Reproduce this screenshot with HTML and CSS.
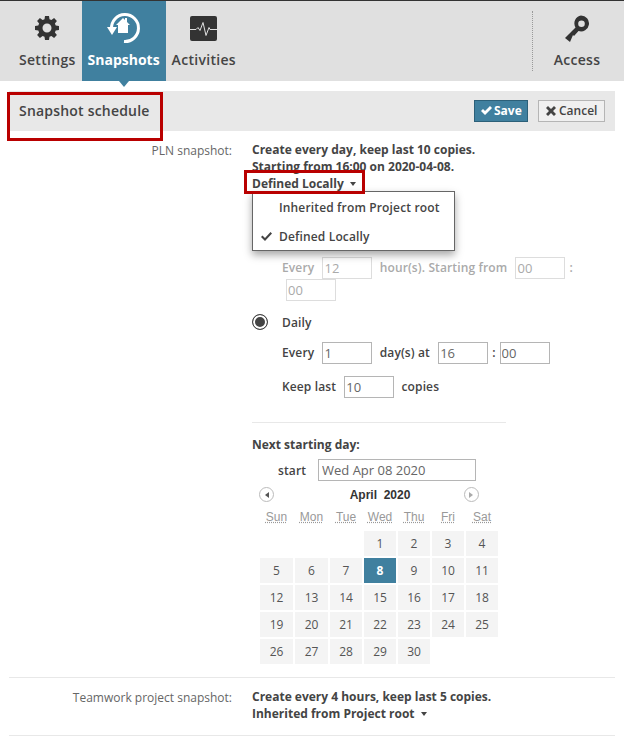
FILE: index.html
```html
<!DOCTYPE html>
<html lang="en">
<head>
    <meta charset="UTF-8">
    <meta name="viewport" content="width=device-width, initial-scale=1.0">
    <title>Snapshot schedule</title>
    <link rel="stylesheet" href="styles.css">
</head>
<body>

<nav class="tabs">
    <a class="tab">
        <span class="tab-icon">
            <svg width="24" height="24" viewBox="0 0 24 24"><path fill="#333" fill-rule="evenodd" d="M10 0h4l.5 3.300 1.900.8 2.700-2 2.800 2.800-2 2.700.8 1.900 3.300.5v4l-3.300.5-.8 1.900 2 2.700-2.800 2.800-2.700-2-1.900.8-.5 3.300h-4l-.5-3.300-1.900-.8-2.700 2-2.800-2.800 2-2.700-.8-1.900-3.300-.5v-4l3.300-.5.8-1.900-2-2.700 2.800-2.800 2.700 2 1.900-.8zM12 7.500a4.500 4.500 0 1 0 0 9 4.500 4.500 0 0 0 0-9z"/></svg>
        </span>
        <span>Settings</span>
    </a>
    <a class="tab tab-active">
        <span class="tab-icon">
            <svg width="34" height="32" viewBox="0 0 34 32"><path fill="none" stroke="#fff" stroke-width="3" d="M4.500 17A13.500 13.500 0 1 1 17 29.500"/><path fill="#fff" d="M0 15h10l-5 8zM16 6l2 2V6h2v4l3 3h-2v8H11v-8H9z"/></svg>
        </span>
        <span>Snapshots</span>
    </a>
    <a class="tab">
        <span class="tab-icon">
            <svg width="27" height="25" viewBox="0 0 27 25"><rect width="27" height="25" rx="2" fill="#333"/><path fill="none" stroke="#e0e0e0" d="M0 13.500h6l2-2 2 3 3-8 3 13 3-8 1 2h7"/></svg>
        </span>
        <span>Activities</span>
    </a>
    <a class="tab tab-access">
        <span class="tab-icon">
            <svg width="24" height="27" viewBox="0 0 24 27"><path fill="#333" fill-rule="evenodd" d="M16 .5a8 8 0 1 1-2.500 15.600L9 21l-1-1-3 7-5-4 4-4 6.500-6.500A8 8 0 0 1 16 .5zm.5 5a3.300 3.300 0 1 0 0 6.600 3.300 3.300 0 0 0 0-6.600z"/></svg>
        </span>
        <span>Access</span>
    </a>
</nav>

<div class="title-bar">
    <h2 class="title">Snapshot schedule</h2>
    <div class="actions">
        <button class="btn btn-save">
            <svg width="11" height="9" viewBox="0 0 11 9"><path fill="#fff" d="M0 5l2-2 2 2 5-5 2 2-7 7z"/></svg>
            Save
        </button>
        <button class="btn btn-cancel">
            <svg width="10" height="10" viewBox="0 0 10 10"><path fill="#444" d="M2 0l3 3 3-3 2 2-3 3 3 3-2 2-3-3-3 3-2-2 3-3-3-3z"/></svg>
            Cancel
        </button>
    </div>
</div>

<section class="row">
    <div class="row-label">PLN snapshot:</div>
    <div class="row-body">
        <div class="summary">Create every day, keep last 10 copies.<br>Starting from 16:00 on 2020-04-08.</div>
        <div class="dropdown">
            <a class="dropdown-toggle">Defined Locally <i class="caret"></i></a>
            <ul class="dropdown-menu">
                <li>Inherited from Project root</li>
                <li class="checked">
                    <svg class="menu-check" width="11" height="9" viewBox="0 0 11 9"><path fill="#444" d="M0 5l1.500-1.500 2.500 2.500 5.500-6 1.500 1.500-7 7.500z"/></svg>
                    Defined Locally
                </li>
            </ul>
        </div>

        <div class="form-line muted hourly">
            Every <input class="num" value="12" disabled> hour(s). Starting from <input class="num" value="00" disabled>: <input class="num num-minutes" value="00" disabled>
        </div>

        <label class="radio-line"><span class="radio"></span>Daily</label>
        <div class="form-line">Every <input class="num" value="1"> day(s) at <input class="num" value="16">:<input class="num num-minutes" value="00"></div>
        <div class="form-line">Keep last <input class="num" value="10"> copies</div>

        <hr class="divider">

        <div class="next-title">Next starting day:</div>
        <div class="start-line"><span>start</span><input class="start-input" value="Wed Apr 08 2020"></div>

        <div class="calendar">
            <div class="cal-head">
                <span class="cal-nav"><i class="arrow-left"></i></span>
                <span class="cal-month">April&nbsp; 2020</span>
                <span class="cal-nav"><i class="arrow-right"></i></span>
            </div>
            <div class="cal-grid">
                <abbr>Sun</abbr><abbr>Mon</abbr><abbr>Tue</abbr><abbr>Wed</abbr><abbr>Thu</abbr><abbr>Fri</abbr><abbr>Sat</abbr>
                <span class="blank"></span><span class="blank"></span><span class="blank"></span>
                <a>1</a><a>2</a><a>3</a><a>4</a>
                <a>5</a><a>6</a><a>7</a><a class="today">8</a><a>9</a><a>10</a><a>11</a>
                <a>12</a><a>13</a><a>14</a><a>15</a><a>16</a><a>17</a><a>18</a>
                <a>19</a><a>20</a><a>21</a><a>22</a><a>23</a><a>24</a><a>25</a>
                <a>26</a><a>27</a><a>28</a><a>29</a><a>30</a>
            </div>
        </div>
    </div>
</section>

<section class="row row-last">
    <div class="row-label">Teamwork project snapshot:</div>
    <div class="row-body">
        <div class="summary">Create every 4 hours, keep last 5 copies.</div>
        <a class="dropdown-toggle">Inherited from Project root <i class="caret"></i></a>
    </div>
</section>

<!-- red annotation boxes -->
<div class="mark mark-title"></div>
<div class="mark mark-drop"></div>

</body>
</html>
```

FILE: styles.css
```css
body {
    font-family: "Open Sans", Arial, sans-serif;
    font-size: 12px;
    color: #444;
    background-color: #fff;
    margin: 0;
    width: 624px;
    height: 737px;
    overflow: hidden;
    position: relative;
}

.tabs {
    display: flex;
    height: 80px;
    padding-left: 13px;
    background-color: #e0e0e0;
    border-top: 1px solid #333;
}

.tab {
    padding: 0 6px;
    display: flex;
    flex-direction: column;
    align-items: center;
    font-size: 14px;
    font-weight: 600;
    letter-spacing: 0.3px;
    color: #444;
    position: relative;
}

.tab-icon {
    height: 34px;
    margin-top: 10px;
    margin-bottom: 5px;
    display: flex;
    align-items: center;
}

.tab-active {
    width: 84px;
    box-sizing: border-box;
    background-color: #40809f;
    color: #fff;
    font-weight: 700;
    letter-spacing: 0;
}

.tab-active:after {
    content: "";
    position: absolute;
    left: 37px;
    bottom: -6px;
    border-left: 5px solid transparent;
    border-right: 5px solid transparent;
    border-top: 6px solid #40809f;
}

.tab-access {
    margin-left: auto;
    margin-right: 2px;
    width: 90px;
    box-sizing: border-box;
}

.tab-access:before {
    content: "";
    position: absolute;
    left: 0;
    top: 10px;
    height: 60px;
    border-left: 1px dotted #999;
}

.title-bar {
    display: flex;
    justify-content: space-between;
    align-items: center;
    height: 40px;
    margin: 10px 9px 0;
    background-color: #e8e8e8;
}

.title {
    margin: -1px 0 0 10px;
    font-size: 14px;
    font-weight: 600;
    letter-spacing: 0.2px;
    color: #444;
}

.actions {
    display: flex;
    gap: 10px;
    margin-right: 10px;
}

.btn {
    display: flex;
    align-items: center;
    gap: 3px;
    font-family: inherit;
    font-size: 12px;
    height: 22px;
    padding: 0 0 1px 7px;
    border-radius: 0;
    box-sizing: border-box;
}

.btn-save {
    width: 54px;
    padding-left: 6px;
    gap: 2px;
    background-color: #40809f;
    border: 1px solid #2c6079;
    color: #fff;
    font-weight: 700;
}

.btn-cancel {
    width: 67px;
    background-color: #f0f0f0;
    border: 1px solid #b5b5b5;
    color: #444;
    font-weight: 600;
}

.row {
    display: flex;
    margin: 0 9px;
}

.row-label {
    width: 243px;
    padding-right: 20px;
    box-sizing: border-box;
    text-align: right;
    color: #666;
    line-height: 17px;
    padding-top: 1px;
}

.row-body {
    font-weight: 600;
    letter-spacing: 0.12px;
    line-height: 17px;
    flex: 1;
}

.row:first-of-type {
    padding-top: 10px;
}

.row-last {
    border-top: 1px solid #e8e8e8;
    border-bottom: 1px solid #e8e8e8;
    margin-top: 13px;
    padding: 10px 0 13px;
}

.summary,
.dropdown-toggle,
.next-title {
    font-weight: 700;
    letter-spacing: 0;
}

.dropdown {
    position: relative;
}

.caret {
    display: inline-block;
    margin-left: 3px;
    vertical-align: 2px;
    border-left: 3.500px solid transparent;
    border-right: 3.500px solid transparent;
    border-top: 4px solid #444;
}

.dropdown-menu {
    position: absolute;
    z-index: 5;
    left: 0;
    top: 16px;
    width: 201px;
    height: 57px;
    margin: 0;
    padding: 1px 0 0;
    list-style: none;
    background-color: #fff;
    border: 1px solid #666;
    box-shadow: 0 4px 8px rgba(0, 0, 0, 0.35);
}

.dropdown-menu li {
    height: 29px;
    line-height: 29px;
    padding-left: 26px;
    font-weight: 600;
    letter-spacing: 0.15px;
    position: relative;
}

.menu-check {
    position: absolute;
    left: 8px;
    top: 10px;
}

.form-line {
    padding-left: 30px;
    line-height: 22px;
    height: 22px;
    margin-top: 12px;
}

.hourly {
    margin-top: 65px;
    height: 44px;
    width: 325px;
}

.muted {
    color: #aaa;
}

.num {
    width: 50px;
    height: 22px;
    box-sizing: border-box;
    border: 1px solid #b5b5b5;
    padding: 0 1px;
    font-family: inherit;
    font-size: 13px;
    color: #666;
    vertical-align: top;
    margin: 0 4px 0 5px;
    background: #fff;
}

.num-minutes {
    margin-left: 4px;
}

.num[disabled] {
    border-color: #ddd;
    color: #aaa;
}

.radio-line {
    display: flex;
    align-items: center;
    height: 16px;
    margin-top: 13px;
}

.radio {
    width: 16px;
    height: 16px;
    box-sizing: border-box;
    border: 1px solid #444;
    border-radius: 50%;
    background: #444;
    box-shadow: inset 0 0 0 2px #fff;
    margin: 0 14px 0 0;
}

.divider {
    width: 254px;
    margin: 24px 0 13px;
    border: 0;
    border-top: 1px solid #e8e8e8;
}

.start-line {
    display: flex;
    align-items: center;
    margin-top: 6px;
}

.start-line span {
    width: 66px;
    padding-left: 26px;
    box-sizing: border-box;
}

.start-input {
    width: 158px;
    height: 22px;
    box-sizing: border-box;
    border: 1px solid #b5b5b5;
    padding: 0 3px;
    font-family: inherit;
    font-size: 13px;
    color: #666;
}

.calendar {
    margin-left: 7px;
    font-family: "Liberation Sans", Arial, sans-serif;
    font-weight: 400;
    letter-spacing: 0;
}

.cal-head {
    display: flex;
    justify-content: space-between;
    align-items: center;
    height: 23px;
    margin-top: 2px;
    width: 220px;
}

.cal-month {
    margin-left: 22px;
    padding-top: 1px;
    font-weight: 700;
    font-size: 12px;
    color: #333;
}

.cal-nav {
    width: 15px;
    height: 15px;
    box-sizing: border-box;
    border: 1px solid #bbb;
    border-radius: 50%;
    display: flex;
    align-items: center;
    justify-content: center;
}

.arrow-left {
    border-top: 3px solid transparent;
    border-bottom: 3px solid transparent;
    border-right: 4px solid #555;
}

.arrow-right {
    border-top: 3px solid transparent;
    border-bottom: 3px solid transparent;
    border-left: 4px solid #aaa;
}

.cal-grid {
    display: grid;
    margin-left: 1px;
    grid-template-columns: 33px 33px 32px 32px 32px 32px 32px;
    grid-template-rows: 23px;
    grid-auto-rows: 25px;
    gap: 2px;
}

.cal-grid abbr {
    text-align: center;
    color: #999;
    line-height: 22px;
    text-decoration: underline dotted;
}

.cal-grid a {
    background-color: #f4f4f4;
    color: #555;
    font-family: "Open Sans", Arial, sans-serif;
    text-align: center;
    line-height: 25px;
}

.cal-grid .today {
    background-color: #40809f;
    color: #fff;
    font-weight: 700;
}

.mark {
    position: absolute;
    box-sizing: border-box;
    border: 3px solid #b90000;
    z-index: 10;
}

.mark-title {
    left: 7px;
    top: 92px;
    width: 156px;
    height: 49px;
}

.mark-drop {
    left: 244px;
    top: 170px;
    width: 121px;
    height: 24px;
}
```
